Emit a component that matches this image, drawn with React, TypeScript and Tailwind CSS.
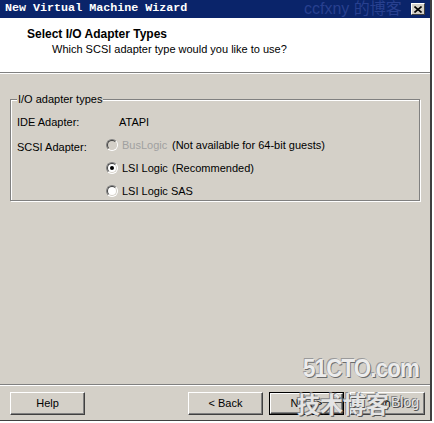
const ui = { fontFamily: '"Liberation Sans", Arial, sans-serif' };

function Radio({ checked, disabled }: { checked?: boolean; disabled?: boolean }) {
  return (
    <span
      className={`relative inline-block h-[12px] w-[12px] shrink-0 rounded-full border border-t-[#808080] border-l-[#808080] border-r-white border-b-white ${
        disabled ? "bg-[#d4d0c8]" : "bg-white"
      }`}
    >
      <span className="absolute inset-0 rounded-full border border-t-[#404040] border-l-[#404040] border-r-[#d4d0c8] border-b-[#d4d0c8]" />
      {checked && (
        <span className="absolute left-[3px] top-[3px] h-[4px] w-[4px] rounded-full bg-black" />
      )}
    </span>
  );
}

function Button({ label, primary }: { label: string; primary?: boolean }) {
  return (
    <div
      className={`h-[23px] w-[75px] ${primary ? "border border-black" : ""}`}
    >
      <div className="flex h-full w-full items-center justify-center border border-t-white border-l-white border-r-[#404040] border-b-[#404040] bg-[#d4d0c8] text-[11px] text-black shadow-[inset_-1px_-1px_0_#808080]">
        {label}
      </div>
    </div>
  );
}

export default function App() {
  return (
    <div className="relative h-[423px] w-[434px] overflow-hidden bg-white" style={ui}>
      <div className="flex h-[421px] w-[432px] flex-col border-b border-r-2 border-b-[#404040] border-r-[#404040] bg-[#d4d0c8]">
        {/* title bar */}
        <div className="relative flex h-[18px] shrink-0 items-center justify-between bg-[#0a246a] pl-[5px] pr-[5px]">
          <span
            className="text-[11.7px] font-bold leading-none text-white"
            style={{ fontFamily: '"Liberation Mono", "Courier New", monospace' }}
          >
            New Virtual Machine Wizard
          </span>
          {/* watermark */}
          <span
            className="absolute left-[304px] top-[0px] text-[16px] leading-[17px] text-[#28408f]"
            style={{ fontFamily: '"Liberation Sans", "Noto Sans CJK SC", sans-serif' }}
          >
            ccfxny 的博客
          </span>
          <span className="relative z-10 flex h-[12px] w-[14px] items-center justify-center border border-t-white border-l-white border-r-[#404040] border-b-[#404040] bg-[#d4d0c8]">
            <svg width="8" height="7" viewBox="0 0 8 7">
              <path d="M0.5 0.5 L7.5 6.5 M7.5 0.5 L0.5 6.5" stroke="#000" strokeWidth="1.6" />
            </svg>
          </span>
        </div>

        {/* header */}
        <div className="h-[55px] shrink-0 border-b border-b-[#808080] bg-white pl-[27px] pt-[9px] shadow-[0_1px_0_#fff]">
          <div className="text-[12px] font-bold leading-[14px] text-black">Select I/O Adapter Types</div>
          <div className="mt-[2px] pl-[25px] text-[11px] leading-[13px] text-black">
            Which SCSI adapter type would you like to use?
          </div>
        </div>

        {/* body */}
        <div className="flex-1 px-[10px] pt-[20px] text-[11px] text-black">
          <fieldset className="h-[108px] border border-[#808080] pl-[6px] pr-[6px] shadow-[inset_1px_1px_0_#fff,1px_1px_0_#fff]">
            <legend className="bg-[#d4d0c8] px-[1px] leading-[13px]">I/O adapter types</legend>
            <div className="mt-[9px] flex h-[14px] items-center">
              <span className="w-[102px]">IDE Adapter:</span>
              <span>ATAPI</span>
            </div>
            <div className="mt-[9px] flex">
              <span className="w-[89px] pt-[1px]">SCSI Adapter:</span>
              <div className="flex flex-col gap-[9px]">
                <div className="flex h-[14px] items-center">
                  <Radio disabled />
                  <span className="ml-[4px] w-[50px] text-[#a0a0a0]">BusLogic</span>
                  <span>(Not available for 64-bit guests)</span>
                </div>
                <div className="flex h-[14px] items-center">
                  <Radio checked />
                  <span className="ml-[4px] w-[50px]">LSI Logic</span>
                  <span>(Recommended)</span>
                </div>
                <div className="flex h-[14px] items-center">
                  <Radio />
                  <span className="ml-[4px]">LSI Logic SAS</span>
                </div>
              </div>
            </div>
          </fieldset>
        </div>

        {/* footer */}
        <div className="h-[36px] shrink-0 border-t border-t-[#808080] shadow-[inset_0_1px_0_#fff]">
          <div className="flex items-center pl-[10px] pr-[5px] pt-[7px]">
            <Button label="Help" />
            <div className="ml-auto flex gap-[6px]">
              <Button label="< Back" />
              <Button label="Next >" primary />
              <Button label="Cancel" />
            </div>
          </div>
        </div>
      </div>

      {/* watermarks */}
      <div
        className="absolute left-[303px] top-[354px] origin-left scale-x-[0.86] text-[26px] font-bold leading-[28px] tracking-[-1px] text-[#ececec] [text-shadow:1px_1px_0_#6b6b6b,-1px_-1px_0_#9a9a9a]"
      >
        51CTO.com
      </div>
      <div
        className="absolute left-[297px] top-[390px] flex items-end gap-[2px] text-[#e4e4e4] [text-shadow:1px_1px_0_#555,-1px_-1px_0_#888]"
        style={{ fontFamily: '"Noto Sans CJK SC", sans-serif' }}
      >
        <span className="text-[23px] font-bold leading-[26px]">技术博客</span>
        <span className="pb-[7px] text-[14px] leading-[14px]" style={ui}>Blog</span>
      </div>
    </div>
  );
}
